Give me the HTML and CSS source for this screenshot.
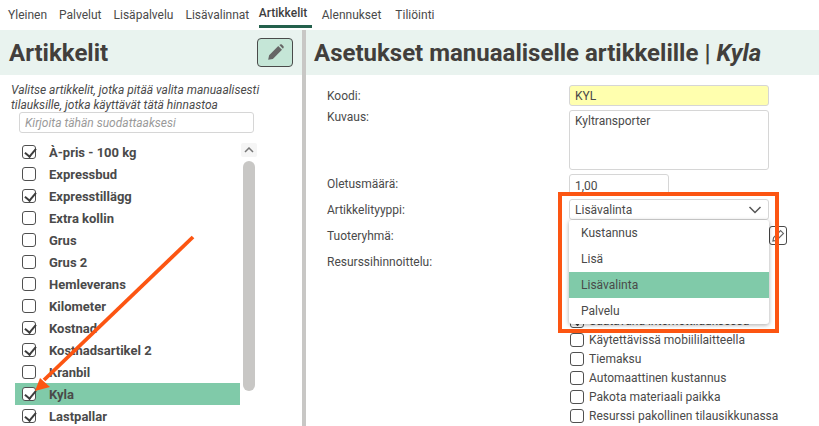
FILE: index.html
```html
<!DOCTYPE html>
<html lang="fi">
<head>
<meta charset="utf-8">
<title>Artikkelit</title>
<link rel="stylesheet" href="styles.css">
</head>
<body>
<nav class="tabs">
  <a class="tab">Yleinen</a>
  <a class="tab">Palvelut</a>
  <a class="tab">Lisäpalvelu</a>
  <a class="tab">Lisävalinnat</a>
  <a class="tab tab-active">Artikkelit</a>
  <a class="tab">Alennukset</a>
  <a class="tab">Tiliöinti</a>
</nav>
<main class="panels">
  <section class="left">
    <header class="head head-left">
      <h1>Artikkelit</h1>
      <button class="edit-btn" aria-label="Muokkaa">
        <svg width="17" height="17" viewBox="0 0 16 16"><path fill="#666" d="M10.6 1.9l3.5 3.5-8.6 8.6-4.4.9.9-4.4zM11.6 1l.9-.6c.5-.3 1-.2 1.4.1l1.6 1.6c.4.4.4 1 .1 1.4l-.6.9z"/></svg>
      </button>
    </header>
    <p class="intro">Valitse artikkelit, jotka pitää valita manuaalisesti tilauksille, jotka käyttävät tätä hinnastoa</p>
    <input class="filter" placeholder="Kirjoita tähän suodattaaksesi">
    <div class="list-wrap">
      <ul class="list">
        <li class="item"><span class="cb on"></span>À-pris - 100 kg</li>
        <li class="item"><span class="cb"></span>Expressbud</li>
        <li class="item"><span class="cb on"></span>Expresstillägg</li>
        <li class="item"><span class="cb"></span>Extra kollin</li>
        <li class="item"><span class="cb"></span>Grus</li>
        <li class="item"><span class="cb"></span>Grus 2</li>
        <li class="item"><span class="cb"></span>Hemleverans</li>
        <li class="item"><span class="cb"></span>Kilometer</li>
        <li class="item"><span class="cb on"></span>Kostnad</li>
        <li class="item"><span class="cb on"></span>Kostnadsartikel 2</li>
        <li class="item"><span class="cb"></span>Kranbil</li>
        <li class="item item-sel"><span class="cb on"></span>Kyla</li>
        <li class="item"><span class="cb on"></span>Lastpallar</li>
      </ul>
      <div class="scroll">
        <span class="scroll-up"><svg width="10" height="6" viewBox="0 0 10 6"><path d="M1 5l4-4 4 4" fill="none" stroke="#777" stroke-width="1.5"/></svg></span>
        <span class="scroll-thumb"></span>
      </div>
    </div>
  </section>
  <div class="divider"></div>
  <section class="right">
    <header class="head">
      <h1>Asetukset manuaaliselle artikkelille | <em>Kyla</em></h1>
    </header>
    <form class="form">
      <div class="row row-code"><label>Koodi:</label><input class="ctl code" value="KYL"></div>
      <div class="row row-desc"><label>Kuvaus:</label><div class="ctl desc">Kyltransporter</div></div>
      <div class="row row-qty"><label>Oletusmäärä:</label><input class="ctl qty" value="1,00"></div>
      <div class="row row-type"><label>Artikkelityyppi:</label>
        <div class="ctl select">Lisävalinta
          <svg width="14" height="8" viewBox="0 0 14 8"><path d="M1.5 1l5.5 5.5L12.5 1" fill="none" stroke="#555" stroke-width="1.5"/></svg>
        </div>
      </div>
      <div class="row row-group"><label>Tuoteryhmä:</label><span class="spacer"></span>
        <button type="button" class="mini-btn" aria-label="Muokkaa">
          <svg width="13" height="13" viewBox="0 0 16 16"><path fill="none" stroke="#666" stroke-width="1.4" d="M10.6 1.9l3.5 3.5-8.6 8.6-4.4.9.9-4.4z"/></svg>
        </button>
      </div>
      <div class="row row-res"><label>Resurssihinnoittelu:</label></div>
      <ul class="checks">
        <li class="check"><span class="cb on"></span>Saatavana internettilauksessa</li>
        <li class="check"><span class="cb"></span>Käytettävissä mobiililaitteella</li>
        <li class="check"><span class="cb"></span>Tiemaksu</li>
        <li class="check"><span class="cb"></span>Automaattinen kustannus</li>
        <li class="check"><span class="cb"></span>Pakota materiaali paikka</li>
        <li class="check"><span class="cb"></span>Resurssi pakollinen tilausikkunassa</li>
      </ul>
    </form>
  </section>
</main>
<ul class="dropdown">
  <li>Kustannus</li>
  <li>Lisä</li>
  <li class="opt-sel">Lisävalinta</li>
  <li>Palvelu</li>
</ul>
<div class="callout"></div>
<svg class="arrow" width="819" height="426" viewBox="0 0 819 426">
  <path d="M193 237L44 380" stroke="#fc5512" stroke-width="3.8" fill="none"/>
  <path d="M35 391l5-13 10 9z" fill="#fc5512"/>
</svg>
</body>
</html>
```
FILE: styles.css
```css
* { box-sizing: border-box; }
html, body { margin: 0; height: 100%; overflow: hidden; }
body {
  font-family: Roboto, "Liberation Sans", sans-serif;
  font-size: 12px;
  color: #4a4a4a;
  background: #fff;
}
.tabs { display: flex; gap: 12px; height: 30px; padding-left: 8px; }
.tab { height: 28px; line-height: 30px; color: #4a4a4a; }
.tab:last-child { margin-left: 2px; }
.tab-active {
  width: 53px; margin-left: -2.5px; margin-right: -2px;
  border-bottom: 3px solid #23604c; height: 28px; line-height: 27px;
  font-weight: 500; color: #3d3d3d;
}
.panels { display: flex; height: 396px; overflow: hidden; }
.left { width: 302px; flex: none; }
.divider { width: 4px; flex: none; background: #c8c7c5; }
.right { flex: 1; min-width: 0; }
.head {
  display: flex; align-items: center; justify-content: space-between;
  height: 45px; padding: 0 8px; background: #e9f3ef;
}
.head-left { padding: 0 9px 0 9px; }
h1 { margin: 0; font-size: 24px; line-height: 28px; font-weight: 700; color: #423f3c; white-space: nowrap; }
h1 em { font-style: italic; }
.edit-btn {
  display: flex; align-items: center; justify-content: center;
  width: 36px; height: 29px; padding: 0; margin-top: -1px;
  background: #c5e6d7; border: 1px solid #4a4a4a; border-radius: 4px;
}
.intro { margin: 8px 0 0 11px; width: 270px; font-style: italic; line-height: 15px; color: #4a4a4a; }
.filter {
  display: block; width: 235px; height: 21px; margin: -1px 0 0 19px; padding: 0 5px;
  border: 1px solid #d6d6d6; border-radius: 3px;
  font: italic 12px Roboto, sans-serif;
}
.filter::placeholder { color: #9a9a9a; opacity: 1; }
.list-wrap { display: flex; margin-top: 8px; padding-left: 15px; }
.list { list-style: none; margin: 0; padding: 0; width: 225px; flex: none; }
.item {
  display: flex; align-items: center; height: 22px; padding-left: 7px;
  font-weight: 700; font-size: 13px; color: #4a4a4a; white-space: nowrap;
}
.item .cb { margin-right: 13px; }
.item-sel { background: #80caa9; }
.cb {
  flex: none; position: relative; display: inline-block; width: 14px; height: 14px;
  border: 1.4px solid #505050; border-radius: 3px; background: #fff;
}
.cb.on::after {
  content: ""; position: absolute; left: 3.6px; top: -0.2px; width: 5px; height: 9px;
  border: solid #3d3d3d; border-width: 0 2px 2px 0; transform: rotate(40deg);
}
.scroll { display: flex; flex-direction: column; align-items: center; width: 16px; margin-left: 1px; padding-top: 2px; }
.scroll-up {
  display: flex; align-items: center; justify-content: center;
  width: 16px; height: 14px; background: #f5f5f5; border-radius: 2px;
}
.scroll-thumb { width: 12px; height: 230px; margin-top: 4px; background: #c8c7c5; border-radius: 6px; }
.form { padding: 10px 0 0 21px; }
.row { display: flex; align-items: flex-start; margin-bottom: 4px; }
.row label { width: 242px; height: 21px; padding-top: 1px; flex: none; line-height: 21px; color: #4a4a4a; }
.ctl {
  display: block; width: 200px; height: 21px; padding: 0 5px;
  border: 1px solid #d6d6d6; border-radius: 3px; background: #fff;
  font: 12px Roboto, sans-serif; color: #4a4a4a; line-height: 20px;
}
input.ctl { padding-top: 1px; }
.code { background: #ffffae; }
.row-desc label { line-height: 14px; padding-top: 0; }
.desc { height: 60px; line-height: 20px; }
.qty { width: 100px; height: 22px; }
.row-qty label { padding-top: 0; }
.row-qty { margin-bottom: 3px; }
.row-type { margin-bottom: 5px; }
.select { display: flex; align-items: center; justify-content: space-between; padding-right: 6px; padding-top: 1px; }
.row-group { height: 21px; }
.spacer { width: 200px; flex: none; }
.mini-btn {
  display: flex; align-items: center; justify-content: center;
  width: 18px; height: 19px; padding: 0; margin-top: 1px;
  background: #fff; border: 1px solid #4a4a4a; border-radius: 3px;
}
.row-res { height: 61px; margin-bottom: 0; }
.row-res label { padding-top: 2px; height: 23px; }
.checks { list-style: none; margin: 0 0 0 243px; padding: 0; }
.check { display: flex; align-items: center; height: 19px; white-space: nowrap; }
.check .cb { margin-right: 5px; }
.dropdown {
  position: absolute; left: 569px; top: 220px; width: 200px; height: 104px;
  margin: 0; padding: 0; list-style: none; background: #fff; border-radius: 3px;
  box-shadow: 0 1px 4px rgba(0,0,0,.35);
}
.dropdown li { height: 26px; line-height: 27px; padding-left: 12px; color: #4a4a4a; }
.dropdown .opt-sel { background: #80caa9; }
.callout {
  position: absolute; left: 558px; top: 192px; width: 221px; height: 141px;
  border: 4px solid #fc5512; pointer-events: none;
}
.arrow { position: absolute; left: 0; top: 0; pointer-events: none; }
```
